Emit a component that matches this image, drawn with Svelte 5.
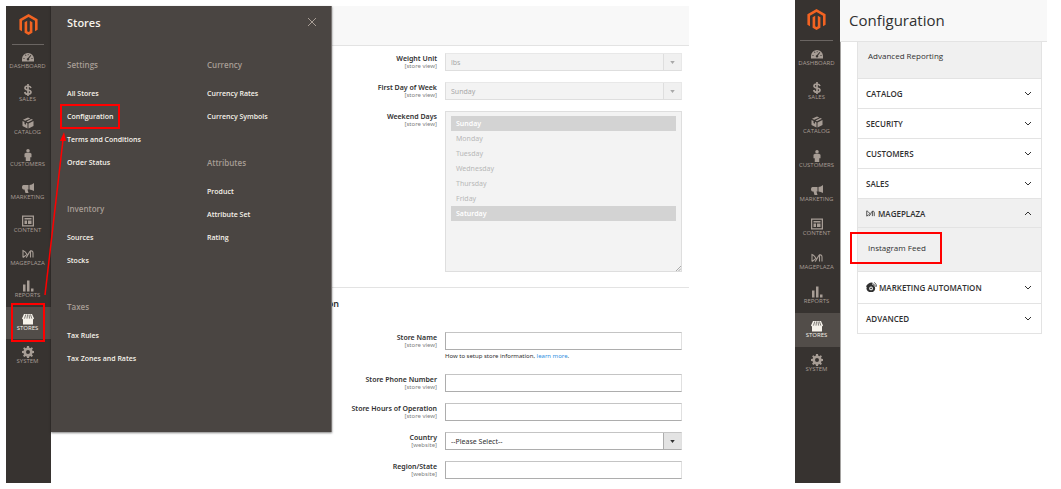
<script>
  let navItems = ['Dashboard', 'Sales', 'Catalog', 'Customers', 'Marketing', 'Content', 'Mageplaza', 'Reports', 'Stores', 'System'];

  let menuColumns = [
    [
      { title: 'Settings', links: ['All Stores', 'Configuration', 'Terms and Conditions', 'Order Status'] },
      { title: 'Inventory', links: ['Sources', 'Stocks'] },
      { title: 'Taxes', links: ['Tax Rules', 'Tax Zones and Rates'] }
    ],
    [
      { title: 'Currency', links: ['Currency Rates', 'Currency Symbols'] },
      { title: 'Attributes', links: ['Product', 'Attribute Set', 'Rating'] }
    ]
  ];

  let days = ['Sunday', 'Monday', 'Tuesday', 'Wednesday', 'Thursday', 'Friday', 'Saturday'];
  let weekend = $state(['Sunday', 'Saturday']);

  let active = $state('Stores');
  let menuOpen = $state(true);
  let openSection = $state('Mageplaza');

  function selectItem(item) {
    active = item;
    menuOpen = item === 'Stores';
  }

  function toggleSection(name) {
    openSection = openSection === name ? '' : name;
  }
</script>

{#snippet mageplaza()}
  <path d="M2 19V5c3 1 6 4 8 7.500C8 15 5 17 2 19M8 19c4-3 5-10 9-13v13M17 6c3-1 5 1 5 4v9" fill="none" stroke="currentColor" stroke-width="2.200" />
{/snippet}

{#snippet icon(name)}
  <svg class="icon" viewBox="0 0 24 24" aria-hidden="true">
    {#if name === 'Dashboard'}
      <path fill-rule="evenodd" d="M12 4A12 12 0 0 0 0 16v5h24v-5A12 12 0 0 0 12 4zM3 14h2v2H3zM6 8l1.500-1 1.500 2-1.500 1zM11.500 6h1.500v2.500h-1.500zM19 14h2v2h-2zM17 8l1.500 1-4.500 6a2.500 2.500 0 1 1-2-1z" />
    {:else if name === 'Sales'}
      <path d="M18 8c-1-3-3-4-6-4-4 0-6 1.500-6 4 0 3 3 3.500 6 4s6 1 6 4.200c0 2.800-2.500 4.300-6 4.300-4 0-6-1.500-6.500-4.500M12 0v24" fill="none" stroke="currentColor" stroke-width="3.400" />
    {:else if name === 'Catalog'}
      <path d="M12 1l4.500 2-10 4.500L2 5.500zM18.500 4L22 5.500l-10 5-3-1.500zM1 8l4 2v4l3 1.500V11.500l3 1.500v10L1 18zM23 8v10l-10 5V13z" />
    {:else if name === 'Customers'}
      <circle cx="12" cy="3.500" r="3.500" />
      <path d="M8 7.500h8l3 2v7h-2.500v7.500h-9v-7.500H5v-7z" />
    {:else if name === 'Marketing'}
      <path d="M24 2v16c-3-2-6-3-9-3v-9c3 0 6-2 9-4zM13 6v9h-2l2 7H7L5 15H3c-4 0-4-9 0-9z" />
    {:else if name === 'Content'}
      <path fill-rule="evenodd" d="M0 1h24v22H0zM2.500 3.500v17h19v-17zM5 6h14v3H5zM5 11h5v7H5zM12 11h7v7h-7z" />
    {:else if name === 'Mageplaza'}
      {@render mageplaza()}
    {:else if name === 'Reports'}
      <path d="M2 9h5v14H2zM10 1h5v22h-5zM18 17h5v6h-5z" />
    {:else if name === 'Stores'}
      <path d="M4 2h16l4 9c0 2-4 2-4 0 0 2-4 2-4 0 0 2-4 2-4 0 0 2-4 2-4 0 0 2-4 2-4 0 0 2-4 2-4 0zM2 12h20v11H2z" />
      <path class="stripes" d="M7.500 3L5 11M11 3l-1 8M14 3l1 8M17 3l2.500 8" />
    {:else}
      <path fill-rule="evenodd" d="M10 0h4l.6 3.400 2 .9L19.500 2.300l2.400 2.400L20 7.500l.8 2L24 10v4l-3.300.6-.8 2 2 2.800-2.500 2.500-2.800-2-2 .9L14 24h-4l-.6-3.200-2-.9-2.800 2-2.500-2.500 2-2.800-.8-2L0 14v-4l3.400-.6.8-2L2.200 4.700l2.400-2.400 2.800 2 2-.9zM12 8a4 4 0 1 0 0 8 4 4 0 0 0 0-8z" />
    {/if}
  </svg>
{/snippet}

{#snippet sidebar(marked)}
  <nav class="sidebar">
    <a class="logo" href="#home" aria-label="Magento">
      <svg viewBox="0 0 24 24" aria-hidden="true">
        <path d="M12 24l-4.455-2.572v-12l2.970-1.715v12.001l1.485.902 1.485-.902V7.713l2.971 1.715v12L12 24zM22.391 6v12l-2.969 1.714V7.713L12 3.430 4.574 7.713v12.001L1.609 18V6L12 0l10.391 6z" />
      </svg>
    </a>
    <ul>
      {#each navItems as item}
        <li>
          <button class="nav-item" class:active={item === active} class:marked={marked && item === 'Stores'} onclick={() => selectItem(item)}>
            {@render icon(item)}
            <span>{item}</span>
          </button>
        </li>
      {/each}
    </ul>
  </nav>
{/snippet}

{#snippet label(id, text, scope)}
  <label for={id}>{text}<small>[{scope}]</small></label>
{/snippet}

{#snippet dropdown(id, text, disabled)}
  <div class="dropdown" class:disabled>
    <select {id} {disabled}>
      <option>{text}</option>
    </select>
    <span class="caret"><svg viewBox="0 0 6 4" aria-hidden="true"><path d="M0 0h6L3 4z" /></svg></span>
  </div>
{/snippet}

{#snippet section(name)}
  <button class="section" class:open={openSection === name} class:tall={name === 'Marketing Automation'} onclick={() => toggleSection(name)}>
    {#if name === 'Mageplaza'}
      <svg class="brand" viewBox="0 0 24 24" aria-hidden="true">{@render mageplaza()}</svg>
    {:else if name === 'Marketing Automation'}
      <svg class="brand large" viewBox="0 0 24 24" aria-hidden="true">
        <path fill-rule="evenodd" d="M0 10c2-5 7-9 13-9l2 1-2 3c4 2 7 5 7 9 0 5-4 8-9 8s-10-3-10-8c0-1 0-2 1-3zM11 10a4 4 0 1 0 0 8 4 4 0 0 0 0-8z" />
        <circle cx="11" cy="14" r="2" />
        <path d="M15 4c3 1 5 3 6 6M18 1c3 2 5 5 5 9" fill="none" stroke="currentColor" stroke-width="1.800" />
      </svg>
    {/if}
    <span>{name}</span>
    <svg class="chevron" viewBox="0 0 8 5" aria-hidden="true"><path d="M1 1l3 3 3-3" /></svg>
  </button>
{/snippet}

<main>
  <div class="app stores">
    {@render sidebar(true)}

    <div class="content">
      <header></header>
      <form>
        <div class="fields">
          {@render label('weight', 'Weight Unit', 'store view')}
          {@render dropdown('weight', 'lbs', true)}
          {@render label('first-day', 'First Day of Week', 'store view')}
          {@render dropdown('first-day', 'Sunday', true)}
          {@render label('weekend', 'Weekend Days', 'store view')}
          <div class="listbox">
            <select id="weekend" multiple disabled bind:value={weekend}>
              {#each days as day}
                <option value={day}>{day}</option>
              {/each}
            </select>
            <svg class="grip" viewBox="0 0 5 5" aria-hidden="true"><path d="M0 5l5-5M2.500 5L5 2.500" /></svg>
          </div>
        </div>

        <h2><span>Store Information</span></h2>
        <div class="fields">
          {@render label('store-name', 'Store Name', 'store view')}
          <div>
            <input id="store-name" type="text" />
            <p>How to setup store information, <a href="#learn">learn more</a>.</p>
          </div>
          {@render label('phone', 'Store Phone Number', 'store view')}
          <input id="phone" type="text" />
          {@render label('hours', 'Store Hours of Operation', 'store view')}
          <input id="hours" type="text" />
          {@render label('country', 'Country', 'website')}
          {@render dropdown('country', '--Please Select--', false)}
          {@render label('region', 'Region/State', 'website')}
          <input id="region" type="text" />
        </div>
      </form>
    </div>

    {#if menuOpen}
      <div class="menu">
        <div class="menu-head">
          <strong>Stores</strong>
          <button aria-label="Close" onclick={() => (menuOpen = false)}>
            <svg viewBox="0 0 10 10" aria-hidden="true"><path d="M1 1l8 8M9 1L1 9" /></svg>
          </button>
        </div>
        <div class="menu-columns">
          {#each menuColumns as column}
            <div>
              {#each column as group}
                <h3>{group.title}</h3>
                <ul>
                  {#each group.links as link}
                    <li><a href="#{link}" class:marked={link === 'Configuration'}>{link}</a></li>
                  {/each}
                </ul>
              {/each}
            </div>
          {/each}
        </div>
      </div>
      <svg class="arrow" viewBox="0 0 24 168" aria-hidden="true">
        <path d="M3 165L21 10" fill="none" stroke="#f00" stroke-width="1.500" />
        <path d="M22 2l2 9h-6z" fill="#f00" />
      </svg>
    {/if}
  </div>

  <div class="app config">
    {@render sidebar(false)}

    <div class="content">
      <header><h1>Configuration</h1></header>
      <div class="sections">
        <div class="report"><a href="#reporting">Advanced Reporting</a></div>
        {@render section('Catalog')}
        {@render section('Security')}
        {@render section('Customers')}
        {@render section('Sales')}
        {@render section('Mageplaza')}
        {#if openSection === 'Mageplaza'}
          <div class="feed"><a href="#instagram">Instagram Feed</a></div>
        {/if}
        {@render section('Marketing Automation')}
        {@render section('Advanced')}
      </div>
    </div>
  </div>
</main>

<style>
  :global(body) {
    background: #fff;
  }

  main {
    display: grid;
    grid-template-columns: minmax(0, 683fr) minmax(0, 252fr);
    column-gap: 106px;
    box-sizing: border-box;
    min-height: 100vh;
    padding: 0 14px 6px 6px;
    font-family: "Open Sans", "Noto Sans", sans-serif;
    font-size: 7px;
    color: #303030;
  }

  main :global(*) {
    box-sizing: border-box;
  }

  ul, h1, h2, h3, p {
    margin: 0;
    padding: 0;
    list-style: none;
  }

  button, input, select {
    margin: 0;
    padding: 0;
    border: none;
    border-radius: 0;
    background: none;
    font: inherit;
    color: inherit;
  }

  button {
    cursor: pointer;
  }

  a {
    color: inherit;
    text-decoration: none;
  }

  svg {
    display: block;
    fill: currentColor;
  }

  .app {
    position: relative;
    display: grid;
    grid-template-columns: 45px minmax(0, 1fr);
  }

  .stores {
    margin-top: 6px;
  }

  /* sidebar */
  .sidebar {
    background: #373330;
    color: #a79d95;
  }

  .config .sidebar {
    border-right: 1px solid #a5a3a1;
    width: 46px;
  }

  .logo {
    display: flex;
    justify-content: center;
    height: 39px;
    margin: 0 7px 0 6px;
    padding-top: 8px;
    border-bottom: 1px solid #6a6562;
    color: #f26322;
  }

  .config .logo {
    height: 41px;
    margin-left: 5px;
    padding-top: 9px;
  }

  .logo svg {
    width: 21px;
    height: 21px;
  }

  .sidebar ul {
    display: grid;
    grid-auto-rows: 1fr;
    height: 327px;
  }

  .config .sidebar ul {
    height: 340px;
  }

  .nav-item {
    position: relative;
    display: flex;
    flex-direction: column;
    align-items: center;
    justify-content: center;
    width: 100%;
    height: 100%;
    padding: 0 2px 1px 0;
    font-size: 6px;
    line-height: 7px;
    text-transform: uppercase;
  }

  .nav-item.active {
    background: #524d49;
    color: #f7f3eb;
  }

  .icon {
    width: 12px;
    height: 12px;
  }

  .stripes {
    fill: none;
    stroke: #524d49;
    stroke-width: 1.5;
  }

  .nav-item.marked::after {
    content: "";
    position: absolute;
    inset: -4px 6px -3px 5px;
    border: 2px solid #f00;
  }

  /* stores menu */
  .menu {
    position: absolute;
    top: 0;
    left: 45px;
    width: 281px;
    padding: 8px 14px 62px 16px;
    background: #4a4542;
    border-right: 1px solid #7a7674;
    box-shadow: 0 1px 2px rgba(0, 0, 0, 0.5);
    color: #f7f3eb;
  }

  .menu-head {
    display: flex;
    justify-content: space-between;
    align-items: center;
    height: 16px;
    margin-bottom: 24px;
    font-size: 11px;
  }

  .menu-head strong {
    font-weight: 600;
  }

  .menu-head svg {
    width: 10px;
    height: 10px;
    stroke: #a79d95;
  }

  .menu-columns {
    display: grid;
    grid-template-columns: 140px 1fr;
  }

  .menu h3 {
    margin-bottom: 6px;
    font-size: 8px;
    font-weight: 600;
    line-height: 22px;
    color: #a79d95;
  }

  .menu ul {
    margin-bottom: 24px;
  }

  .menu-columns > div > ul:last-child {
    margin-bottom: 0;
  }

  .menu li {
    line-height: 23px;
    font-weight: 600;
  }

  .menu li a {
    position: relative;
  }

  .menu a.marked::after {
    content: "";
    position: absolute;
    inset: -8px -6px -8px -7px;
    border: 2px solid #f00;
  }

  .arrow {
    position: absolute;
    top: 124px;
    left: 36px;
    width: 24px;
    height: 168px;
  }

  /* form */
  form {
    font-family: "Noto Sans", "Open Sans", sans-serif;
  }

  header {
    height: 40px;
    background: #f8f8f8;
    border-bottom: 1px solid #e3e3e3;
  }

  .fields {
    display: grid;
    grid-template-columns: 386fr 237fr;
    gap: 11px 8px;
    padding: 7px 7px 0 0;
    align-items: start;
  }

  label {
    padding-top: 1px;
    text-align: right;
    font-weight: 600;
    line-height: 9px;
  }

  small {
    display: block;
    font-size: 6px;
    font-weight: 400;
    line-height: 7px;
    color: #808080;
  }

  input, .dropdown {
    display: block;
    width: 100%;
    height: 18px;
    border: 1px solid #adadad;
    border-top-color: #c4c4c4;
    border-right-color: #e0e0e0;
  }

  .dropdown {
    display: grid;
    grid-template-columns: 1fr 18px;
  }

  .dropdown select {
    appearance: none;
    padding-left: 5px;
    opacity: 1;
  }

  .caret {
    display: grid;
    place-items: center;
    background: #e3e3e3;
    border-left: 1px solid #adadad;
  }

  .caret svg {
    width: 5px;
    height: 3px;
  }

  .dropdown.disabled {
    background: #f3f3f3;
    border-color: #e8e8e8 #e8e8e8 #dedede #dedede;
    color: #a8a8a8;
  }

  .disabled .caret {
    background: #f0f0f0;
    border-color: #dedede;
  }

  .listbox {
    position: relative;
    height: 161px;
  }

  .listbox select {
    width: 100%;
    height: 100%;
    padding: 4px 5px;
    background: #f3f3f3;
    border: 1px solid #dedede;
    overflow: hidden;
    opacity: 1;
  }

  .listbox option {
    min-height: 15px;
    padding: 3px 5px 2px;
    color: #b8b8b8;
  }

  .listbox option:checked {
    background: #d3d3d3 linear-gradient(#d3d3d3, #d3d3d3);
    color: #fff;
    font-weight: 600;
  }

  .grip {
    position: absolute;
    right: 1px;
    bottom: 1px;
    width: 5px;
    height: 5px;
    stroke: #aaa;
  }

  h2 {
    display: grid;
    grid-template-columns: 288fr 350fr;
    margin: 15px 0 13px;
    padding-top: 8px;
    border-top: 1px solid #e3e3e3;
    font-size: 9px;
    font-weight: 600;
    line-height: 16px;
    text-align: right;
  }

  p {
    padding: 1px 0;
    font-size: 6px;
    line-height: 11px;
  }

  p a {
    color: #2f8fdf;
  }

  /* configuration */
  .config header {
    height: 42px;
    padding-left: 9px;
  }

  h1 {
    font-size: 15px;
    font-weight: 400;
    line-height: 40px;
  }

  .sections {
    margin: 0 5px 0 17px;
    border: 1px solid #e3e3e3;
    border-top: none;
  }

  .report, .feed {
    display: flex;
    padding-left: 10px;
    background: #f0f0f0;
    font-size: 8px;
    line-height: 12px;
  }

  .report {
    height: 36px;
    padding-top: 8px;
  }

  .feed {
    align-items: center;
    height: 43px;
    padding-bottom: 3px;
  }

  .feed a {
    position: relative;
  }

  .feed a::after {
    content: "";
    position: absolute;
    inset: -10px -16px -10px -18px;
    border: 2px solid #f00;
  }

  .section {
    display: flex;
    align-items: center;
    gap: 3px;
    width: 100%;
    height: 30px;
    padding: 0 9px 0 8px;
    border-top: 1px solid #e3e3e3;
    font-size: 8px;
    font-weight: 600;
    text-transform: uppercase;
  }

  .section.tall {
    gap: 2px;
    height: 32px;
  }

  .section.open {
    background: #f0f0f0;
    border-bottom: 1px solid #e3e3e3;
  }

  .brand {
    width: 9px;
    height: 9px;
  }

  .brand.large {
    width: 11px;
    height: 11px;
  }

  .chevron {
    width: 8px;
    height: 5px;
    margin-left: auto;
    fill: none;
    stroke: #303030;
  }

  .open .chevron {
    transform: rotate(180deg);
  }
</style>
